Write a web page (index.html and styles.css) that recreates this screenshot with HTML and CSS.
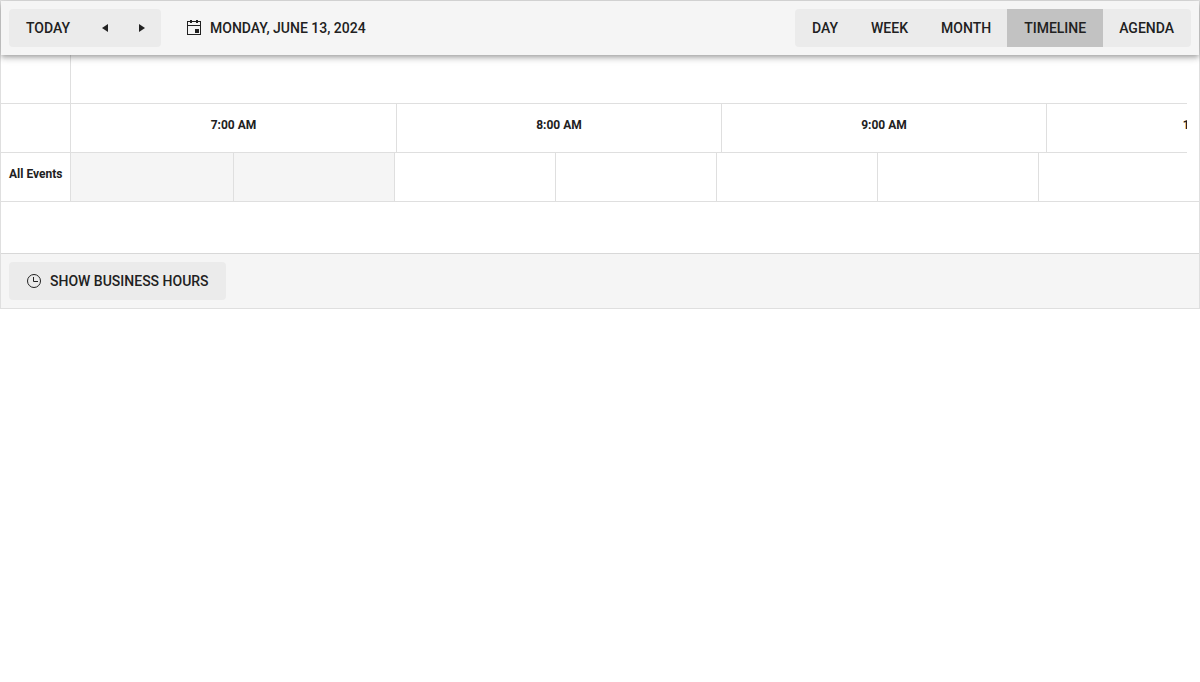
FILE: index.html
```html
<!DOCTYPE html>
<html lang="en">
<head>
<meta charset="utf-8">
<meta name="viewport" content="width=device-width, initial-scale=1">
<title>Scheduler</title>
<link rel="stylesheet" href="styles.css">
</head>
<body>
<main class="scheduler">
  <header class="toolbar">
    <div class="button-group">
      <button type="button" class="button">Today</button>
      <button type="button" class="button icon-button" aria-label="Previous"><svg class="icon" viewBox="0 0 16 16" aria-hidden="true"><path d="M11 4v8L5 8z"/></svg></button>
      <button type="button" class="button icon-button" aria-label="Next"><svg class="icon" viewBox="0 0 16 16" aria-hidden="true"><path d="M5 4v8l6-4z"/></svg></button>
    </div>
    <button type="button" class="button date-button">
      <svg class="icon" viewBox="0 0 16 16" aria-hidden="true"><path fill-rule="evenodd" d="M1 1h3V0h2v1h4V0h2v1h3v14H1zM2 2v3h12V2h-2v1h-2V2H6v1H4V2zM2 6v8h12V6z"/><path d="M9 9h4v4H9z"/></svg>
      <span>Monday, June 13, 2024</span>
    </button>
    <div class="button-group views">
      <button type="button" class="button">Day</button>
      <button type="button" class="button">Week</button>
      <button type="button" class="button">Month</button>
      <button type="button" class="button selected" aria-pressed="true">Timeline</button>
      <button type="button" class="button">Agenda</button>
    </div>
  </header>

  <section class="timeline">
    <div class="pane-row">
      <table class="side"><tbody><tr><td></td></tr><tr><td></td></tr></tbody></table>
      <div class="pane head-pane">
        <table class="grid hours">
          <colgroup><col class="first-hour"><col><col><col></colgroup>
          <thead>
            <tr><th colspan="4"></th></tr>
            <tr><th>7:00 AM</th><th>8:00 AM</th><th>9:00 AM</th><th>10:00 AM</th></tr>
          </thead>
        </table>
      </div>
    </div>
    <div class="pane-row">
      <table class="side"><tbody><tr><th scope="row">All Events</th></tr></tbody></table>
      <div class="pane">
        <table class="grid slots">
          <colgroup><col class="first-slot"><col><col><col><col><col><col><col></colgroup>
          <tbody><tr><td class="nonwork"></td><td class="nonwork"></td><td></td><td></td><td></td><td></td><td></td><td></td></tr></tbody>
        </table>
      </div>
    </div>
  </section>

  <footer class="footer">
    <button type="button" class="button filled">
      <svg class="icon" viewBox="0 0 16 16" aria-hidden="true"><circle class="stroke" cx="8" cy="8" r="6.5"/><path class="stroke" d="M7.500 4v4.500H12"/></svg>
      <span>Show business hours</span>
    </button>
  </footer>
</main>
</body>
</html>
```
FILE: styles.css
```css
* {
  box-sizing: border-box;
}

body {
  margin: 0;
  background: #fff;
  color: #212121;
  font-family: Roboto, sans-serif;
  font-size: 14px;
  line-height: 20px;
}

.scheduler {
  border: 1px solid #dfdfdf;
}

.toolbar {
  position: relative;
  display: flex;
  align-items: center;
  gap: 8px;
  padding: 8px;
  background: #f5f5f5;
  box-shadow: 0 2px 4px -1px rgba(0, 0, 0, 0.2), 0 4px 5px 0 rgba(0, 0, 0, 0.14), 0 1px 10px 0 rgba(0, 0, 0, 0.12);
}

.button-group {
  display: flex;
  background: #ebebeb;
  border-radius: 4px;
  overflow: hidden;
}

.views {
  margin-left: auto;
}

.button {
  display: flex;
  align-items: center;
  justify-content: center;
  gap: 8px;
  padding: 8px 16px;
  border: 1px solid transparent;
  background: transparent;
  color: inherit;
  font: inherit;
  font-weight: 500;
  text-transform: uppercase;
  white-space: nowrap;
  cursor: pointer;
}

.button-group .button + .button {
  margin-left: -1px;
}

.icon-button {
  padding: 8px 10px;
}

.selected {
  border-color: #c2c2c2;
  background: #c2c2c2;
}

.filled {
  background: #ebebeb;
  border-radius: 4px;
}

.icon {
  width: 16px;
  height: 16px;
  fill: currentColor;
}

.stroke {
  fill: none;
  stroke: currentColor;
}

.timeline {
  padding-bottom: 51px;
}

.pane-row {
  display: flex;
}

.pane {
  flex: 1;
  min-width: 0;
  overflow: hidden;
  border-bottom: 1px solid #dfdfdf;
}

.head-pane {
  margin-right: 12px;
  border-bottom: 0;
}

table {
  table-layout: fixed;
  border-collapse: separate;
  border-spacing: 0;
}

.side {
  flex: none;
  width: 70px;
  border-right: 1px solid #dfdfdf;
}

th,
td {
  height: 49px;
  padding: 12px 8px;
  border-bottom: 1px solid #dfdfdf;
  font-size: 12px;
  line-height: 18px;
  font-weight: 700;
  vertical-align: top;
  white-space: nowrap;
}

.side th {
  padding-right: 0;
  text-align: left;
}

.hours {
  width: 1301px;
}

.first-hour {
  width: 326px;
}

.slots {
  width: 1290px;
}

.first-slot {
  width: 163px;
}

.slots td {
  height: 48px;
  border-bottom: 0;
}

.grid th,
.grid td {
  border-right: 1px solid #dfdfdf;
}

.nonwork {
  background: #f5f5f5;
}

.footer {
  display: flex;
  padding: 8px;
  border-top: 1px solid #d8d8d8;
  background: #f5f5f5;
}
```
